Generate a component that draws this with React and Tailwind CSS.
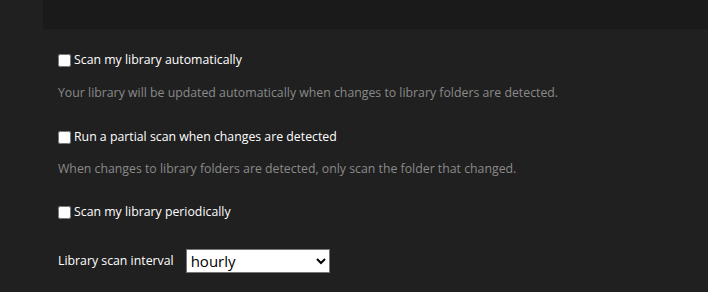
export default function App() {
  const font = { fontFamily: '"Open Sans", "Noto Sans", sans-serif' };
  return (
    <div className="w-[708px] h-[292px] bg-[#202020] overflow-hidden flex flex-col" style={font}>
      <div className="ml-[43px] h-[29px] bg-[#1a1a1a] shrink-0" />
      <div className="flex flex-col pl-[58px]">
        <label className="mt-[21px] h-[20px] flex items-center gap-[3px] text-[12.3px] text-white">
          <input type="checkbox" className="w-[13px] h-[13px] m-0" />
          <span>Scan my library automatically</span>
        </label>
        <p className="mt-[13px] h-[20px] leading-[20px] text-[12.3px] text-[#8a8a8a]">
          Your library will be updated automatically when changes to library folders are detected.
        </p>
        <label className="mt-[24px] h-[20px] flex items-center gap-[3px] text-[12.3px] text-white">
          <input type="checkbox" className="w-[13px] h-[13px] m-0" />
          <span>Run a partial scan when changes are detected</span>
        </label>
        <p className="mt-[12px] h-[20px] leading-[20px] text-[12.3px] text-[#8a8a8a]">
          When changes to library folders are detected, only scan the folder that changed.
        </p>
        <label className="mt-[23px] h-[20px] flex items-center gap-[3px] text-[12.3px] text-white">
          <input type="checkbox" className="w-[13px] h-[13px] m-0" />
          <span>Scan my library periodically</span>
        </label>
        <div className="mt-[27px] flex items-center gap-[12px]">
          <span className="text-[12.3px] text-white">Library scan interval</span>
          <select className="w-[144px] h-[24px] bg-white text-black text-[15px] border border-[#767676] pl-0" style={font} defaultValue="hourly">
            <option value="hourly">hourly</option>
            <option value="daily">daily</option>
            <option value="weekly">weekly</option>
          </select>
        </div>
      </div>
    </div>
  );
}
